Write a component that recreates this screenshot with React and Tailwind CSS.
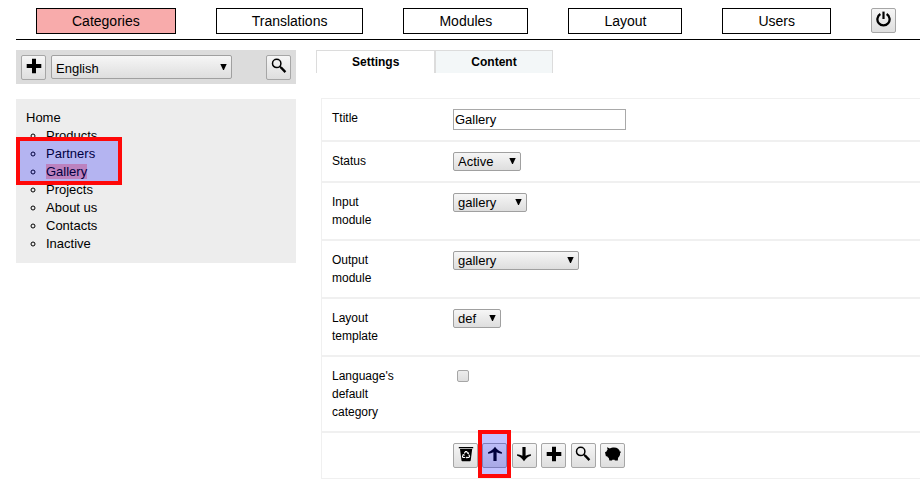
import React from "react";

const NAV = ["Categories", "Translations", "Modules", "Layout", "Users"];
const TREE = ["Products", "Partners", "Gallery", "Projects", "About us", "Contacts", "Inactive"];

function Icon({ children }) {
  return (
    <svg viewBox="0 0 16 16" className="block size-4" fill="currentColor" aria-hidden="true">
      {children}
    </svg>
  );
}

const PowerIcon = () => (
  <Icon>
    <path d="M7.400 .6h2.200v7.400H7.400z" />
    <path d="M5.400 3.100a6.100 6.100 0 1 0 6.200 0" fill="none" stroke="currentColor" strokeWidth="2.300" />
  </Icon>
);

const PlusIcon = () => (
  <Icon>
    <path d="M6 .8h4v5.200h5.300v4H10v5.200H6V10H.7V6H6z" />
  </Icon>
);

const SearchIcon = () => (
  <Icon>
    <circle cx="5.700" cy="5.400" r="4.200" fill="none" stroke="currentColor" strokeWidth="1.500" />
    <path d="M8.600 8.300l1.700 1.600" fill="none" stroke="currentColor" strokeWidth="1.500" />
    <path d="M9.900 9.400l4.500 4.700" fill="none" stroke="currentColor" strokeWidth="2.300" />
  </Icon>
);

const TrashIcon = () => (
  <Icon>
    <path d="M.8 1h14.400v1.300H.8z" />
    <path d="M2 3h12.200l-1.500 11.500c0 .4-.4.700-.8.700H4.300c-.4 0-.8-.3-.8-.7z" />
    <path
      d="M6.300 7.400L7.500 5.600h1.200l1.100 1.600M10.700 8.500l.9 1.700-.7 1.300H9M7.200 11.500H5l-.6-1.100.9-1.700"
      fill="none"
      stroke="#fff"
      strokeWidth="1.100"
    />
    <path d="M8.900 7.700l2 .3.200-2zM9.200 10.200v2.600L7.700 11.500zM4.200 8.600l2-.6.600 2z" fill="#fff" />
  </Icon>
);

const UpIcon = () => (
  <Icon>
    <path d="M8 .8c1.700 2.500 4 4.500 6.900 5.400v1.600c-1.900-.1-3.700-.7-5.300-1.500V15H6.400V6.300C4.800 7.100 3 7.700 1.100 7.800V6.200C4 5.300 6.300 3.300 8 .8z" />
  </Icon>
);

const DownIcon = () => (
  <Icon>
    <path d="M8 15.200c1.700-2.500 4-4.500 6.900-5.400V8.200c-1.900.1-3.700.7-5.300 1.500V1H6.400v8.700C4.800 8.900 3 8.300 1.100 8.200v1.600c2.900.9 5.200 2.900 6.900 5.400z" />
  </Icon>
);

const PigIcon = () => (
  <Icon>
    <path d="M2 1.300l2.900 1.200C6.100 1.700 7.500 1.400 9 1.400c3.300 0 5.600 1.900 6 4.700.4-.1.500-.4.500-.8l.5.200c0 .9-.3 1.400-.9 1.600.1 2-.7 3.600-2 4.700l-.3 2.700h-2.900l-.4-.8c-.7.100-1.400.1-2.100 0l-.4.800H4.400l-.6-2.400c-.8-.5-1.300-1.100-1.700-1.900H.9L0 6.300l1.500-.8c.2-.7.600-1.300 1.100-1.800z" />
  </Icon>
);

function IconButton({ label, children }) {
  return (
    <button
      type="button"
      aria-label={label}
      className="inline-flex size-[25px] shrink-0 justify-center rounded-xs border border-[#a6a6a6] bg-linear-to-b from-[#f6f6f6] to-[#dedede] pt-0.5 align-top text-black"
    >
      {children}
    </button>
  );
}

function Select({ id, label, value, width, tall }) {
  return (
    <span className={"inline-grid align-top text-[13px] " + width + (tall ? " h-6" : " h-[19px]")}>
      <select
        id={id}
        aria-label={label}
        defaultValue={value}
        className={
          "col-start-1 row-start-1 h-full w-full appearance-none rounded-xs border border-[#a0a0a0] bg-linear-to-b from-[#f6f6f6] to-[#dedede] pl-1 leading-4 text-black " +
          (tall ? "pt-[3px]" : "")
        }
      >
        <option>{value}</option>
      </select>
      <svg
        viewBox="0 0 7 6"
        className="pointer-events-none col-start-1 row-start-1 mr-[5px] mb-px h-1.5 w-[7px] self-center justify-self-end"
        aria-hidden="true"
      >
        <path d="M.3 0h6.400L3.900 6h-.8z" />
      </svg>
    </span>
  );
}

function Row({ label, htmlFor, children }) {
  return (
    <div className="flex border border-[#f0f0f0] p-2.5">
      <div className="w-[121px] shrink-0 pr-14 text-xs leading-[18px]">
        {label && <label htmlFor={htmlFor}>{label}</label>}
      </div>
      <div className="min-w-0 flex-1 leading-none">{children}</div>
    </div>
  );
}

export default function App() {
  return (
    <div className="overflow-x-hidden bg-white pl-4 font-['Liberation_Sans',Arial,sans-serif] text-black">
      <header className="flex gap-10 border-b border-black pt-2 pb-[5px] pl-5">
        <nav className="flex gap-10">
          {NAV.map((name) => (
            <a
              key={name}
              href="#"
              className={
                "border border-black px-[35px] py-0.5 text-sm leading-5 " +
                (name === "Categories" ? "bg-[#f8abab]" : "bg-white")
              }
            >
              {name}
            </a>
          ))}
        </nav>
        <IconButton label="Log out">
          <PowerIcon />
        </IconButton>
      </header>

      <div className="flex items-start gap-5 pt-2.5">
        <aside className="w-[280px] shrink-0">
          <div className="flex gap-[5px] bg-[#dcdcdc] px-[5px] pt-[5px] pb-1">
            <IconButton label="Add category">
              <PlusIcon />
            </IconButton>
            <Select id="language" label="Language" value="English" width="w-[181px]" tall />
            <div className="ml-auto">
              <IconButton label="Search">
                <SearchIcon />
              </IconButton>
            </div>
          </div>

          <div className="relative mt-[15px] bg-[#ededed] p-2.5 text-[13px] leading-[18px]">
            <a href="#">Home</a>
            <ul className="list-[circle] pl-5">
              {TREE.map((name) => (
                <li key={name}>
                  <a href="#" className={name === "Gallery" ? "bg-[#f8abab]" : ""}>
                    {name}
                  </a>
                </li>
              ))}
            </ul>
            <div className="pointer-events-none absolute top-[38px] left-0 h-12 w-[106px] border-4 border-[#ff0808] bg-[#0000ff]/24" />
          </div>
        </aside>

        <main className="min-w-0 flex-1">
          <div role="tablist" className="flex text-xs leading-[22px] font-bold">
            <button
              type="button"
              role="tab"
              aria-selected="true"
              className="border border-b-0 border-[#dcdcdc] bg-white px-[35px]"
            >
              Settings
            </button>
            <button
              type="button"
              role="tab"
              aria-selected="false"
              className="border border-b-0 border-[#dcdcdc] bg-[#f3f7f8] px-[35px]"
            >
              Content
            </button>
          </div>

          <form className="-mr-1 ml-[5px] pt-[25px]">
            <Row label="Ttitle" htmlFor="title">
              <input
                id="title"
                type="text"
                defaultValue="Gallery"
                className="block h-[21px] w-[173px] border border-[#a9a9a9] bg-white px-px text-[13px]"
              />
            </Row>
            <Row label="Status" htmlFor="status">
              <Select id="status" value="Active" width="w-[68px]" />
            </Row>
            <Row label="Input module" htmlFor="input-module">
              <Select id="input-module" value="gallery" width="w-[74px]" />
            </Row>
            <Row label="Output module" htmlFor="output-module">
              <Select id="output-module" value="gallery" width="w-[126px]" />
            </Row>
            <Row label="Layout template" htmlFor="layout-template">
              <Select id="layout-template" value="def" width="w-12" />
            </Row>
            <Row label="Language's default category" htmlFor="default-category">
              <input
                id="default-category"
                type="checkbox"
                className="m-1 mt-[3px] block size-3 appearance-none rounded-xs border border-[#a6a6a6] bg-linear-to-b from-[#ededed] to-[#dedede]"
              />
            </Row>
            <Row>
              <IconButton label="Delete">
                <TrashIcon />
              </IconButton>{" "}
              <span className="relative inline-block align-top">
                <IconButton label="Move up">
                  <UpIcon />
                </IconButton>
                <span className="pointer-events-none absolute -inset-x-1 -top-[13px] -bottom-2.5 border-4 border-[#ff0808] bg-[#0000ff]/24" />
              </span>{" "}
              <IconButton label="Move down">
                <DownIcon />
              </IconButton>{" "}
              <IconButton label="Add">
                <PlusIcon />
              </IconButton>{" "}
              <IconButton label="Preview">
                <SearchIcon />
              </IconButton>{" "}
              <IconButton label="Save">
                <PigIcon />
              </IconButton>
            </Row>
          </form>
        </main>
      </div>
    </div>
  );
}
